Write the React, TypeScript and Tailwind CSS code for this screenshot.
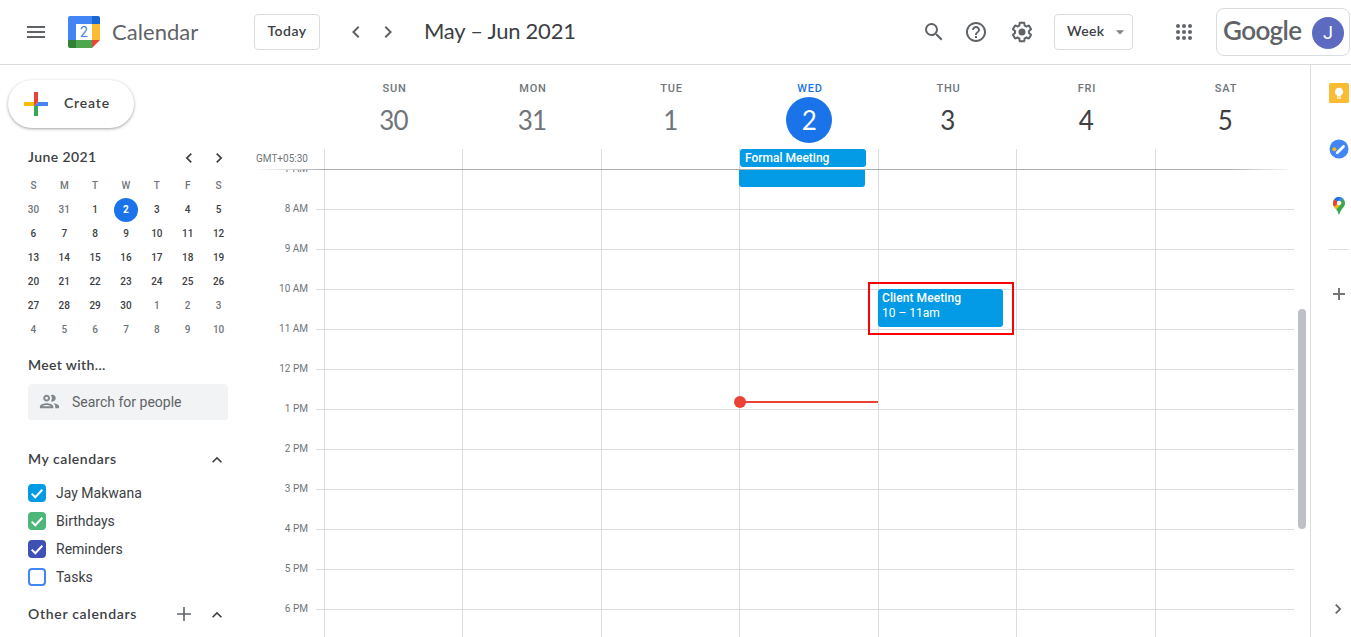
import React from "react";
import {
  MdMenu,
  MdSearch,
  MdHelpOutline,
  MdChevronLeft,
  MdChevronRight,
  MdArrowDropDown,
  MdExpandLess,
  MdOutlineGroup,
} from "react-icons/md";

const display = "font-['Lato','Liberation_Sans',sans-serif]";

const days = [
  { name: "SUN", num: "30", tone: "text-[#70757a]" },
  { name: "MON", num: "31", tone: "text-[#70757a]" },
  { name: "TUE", num: "1", tone: "text-[#70757a]" },
  { name: "WED", num: "2", tone: "text-white", today: true },
  { name: "THU", num: "3", tone: "text-[#3c4043]" },
  { name: "FRI", num: "4", tone: "text-[#3c4043]" },
  { name: "SAT", num: "5", tone: "text-[#3c4043]" },
];

const hours = ["7 AM", "8 AM", "9 AM", "10 AM", "11 AM", "12 PM", "1 PM", "2 PM", "3 PM", "4 PM", "5 PM", "6 PM"];

const monthDays = [
  30, 31, 1, 2, 3, 4, 5, 6, 7, 8, 9, 10, 11, 12, 13, 14, 15, 16, 17, 18, 19, 20, 21, 22, 23, 24, 25, 26, 27, 28, 29,
  30, 1, 2, 3, 4, 5, 6, 7, 8, 9, 10,
];

const calendars = [
  { name: "Jay Makwana", box: "bg-[#039be5] border-[#039be5]", checked: true },
  { name: "Birthdays", box: "bg-[#4db679] border-[#4db679]", checked: true },
  { name: "Reminders", box: "bg-[#3f51b5] border-[#3f51b5]", checked: true },
  { name: "Tasks", box: "bg-white border-[#4285f4]", checked: false },
];

const dayColumns = "grid grid-cols-[138px_139px_138px_139px_138px_139px_139px]";

function CalendarLogo() {
  return (
    <svg width="32" height="32" viewBox="0 0 32 32" className="shrink-0">
      <path d="M2 0h22v8H8v16H0V2a2 2 0 0 1 2-2z" fill="#4285f4" />
      <path d="M24 0h6a2 2 0 0 1 2 2v6h-8z" fill="#1967d2" />
      <path d="M24 8h8v16h-8z" fill="#fbbc34" />
      <path d="M8 24h16v8H8z" fill="#4ca750" />
      <path d="M0 24h8v8H2a2 2 0 0 1-2-2z" fill="#338037" />
      <path d="M24 24h8l-8 8z" fill="#ea4335" />
      <path d="M8 8h16v16H8z" fill="#fff" />
      <text x="16" y="21" textAnchor="middle" fontSize="14" fontFamily="Roboto" fill="#4285f4">
        2
      </text>
    </svg>
  );
}

function SettingsIcon() {
  return (
    <svg width="24" height="24" viewBox="0 0 24 24" fill="#5f6368">
      <path d="M13.85 22.25h-3.7c-.74 0-1.36-.54-1.45-1.27l-.27-1.89c-.27-.14-.53-.29-.79-.46l-1.8.72c-.7.26-1.47-.03-1.81-.65L2.2 15.53c-.35-.66-.2-1.44.36-1.88l1.53-1.19c-.01-.15-.02-.3-.02-.46 0-.15.01-.31.02-.46l-1.52-1.19c-.59-.45-.74-1.26-.37-1.88l1.85-3.19c.34-.62 1.11-.9 1.79-.63l1.81.73c.26-.17.52-.32.78-.46l.27-1.91c.09-.7.71-1.25 1.44-1.25h3.7c.74 0 1.36.54 1.45 1.27l.27 1.89c.27.14.53.29.79.46l1.8-.72c.71-.26 1.48.03 1.82.65l1.84 3.18c.36.66.2 1.44-.36 1.88l-1.52 1.19c.01.15.02.3.02.46s-.01.31-.02.46l1.52 1.19c.56.45.72 1.23.37 1.86l-1.86 3.22c-.34.62-1.11.9-1.8.63l-1.8-.72c-.26.17-.52.32-.78.46l-.27 1.91c-.1.68-.72 1.22-1.46 1.22zm-3.23-2h2.76l.37-2.55.53-.22c.44-.18.88-.44 1.34-.78l.45-.34 2.38.96 1.38-2.4-2.03-1.58.07-.56c.03-.26.06-.51.06-.78s-.03-.53-.06-.78l-.07-.56 2.03-1.58-1.39-2.4-2.39.96-.45-.35c-.42-.32-.87-.58-1.33-.77l-.52-.22-.37-2.55h-2.76l-.37 2.55-.53.21c-.44.19-.88.44-1.34.79l-.45.33-2.38-.95-1.39 2.39 2.03 1.58-.07.56a7 7 0 0 0-.06.79c0 .26.02.53.06.78l.07.56-2.03 1.58 1.38 2.4 2.39-.96.45.35c.43.33.86.58 1.33.77l.53.22.38 2.55z" />
      <circle cx="12" cy="12" r="3.5" />
    </svg>
  );
}

function AppsIcon() {
  return (
    <svg width="24" height="24" viewBox="0 0 24 24" fill="#5f6368">
      {[6, 12, 18].map((y) => [6, 12, 18].map((x) => <circle key={`${x}-${y}`} cx={x} cy={y} r="2" />))}
    </svg>
  );
}

function Header() {
  return (
    <header className="flex h-[65px] items-center border-b border-[#dadce0] pb-px pl-6 text-[#5f6368]">
      <MdMenu size={24} />
      <div className="ml-5">
        <CalendarLogo />
      </div>
      <span className={`${display} ml-3 w-[142px] text-[22px] leading-8 tracking-[0.05px]`}>Calendar</span>
      <button
        className={`${display} h-9 w-[66px] rounded border border-[#dadce0] pb-0.5 text-sm font-semibold tracking-[0.5px] text-[#3c4043]`}
      >
        Today
      </button>
      <MdChevronLeft size={24} className="ml-6" />
      <MdChevronRight size={24} className="ml-2" />
      <h1 className={`${display} ml-6 pb-0.5 text-[22px] leading-8 tracking-[-0.25px] text-[#3c4043]`}>May – Jun 2021</h1>
      <div className="ml-auto flex items-center">
        <MdSearch size={24} />
        <MdHelpOutline size={24} className="ml-[18px]" />
        <div className="ml-[22px]">
          <SettingsIcon />
        </div>
        <button
          className={`${display} ml-5 flex h-9 w-[79px] items-center rounded border border-[#dadce0] pl-3 text-sm font-semibold tracking-[0.35px] text-[#3c4043]`}
        >
          <span className="w-[43px] pb-0.5 text-left">Week</span>
          <MdArrowDropDown size={20} className="text-[#80868b]" />
        </button>
        <div className="ml-[39px]">
          <AppsIcon />
        </div>
        <div className="ml-5 mr-px flex h-12 w-[134px] items-center rounded-lg border border-[#dadce0] pl-1.5 pr-[5px]">
          <span className={`${display} flex-1 pb-1 text-[26px] font-semibold leading-8 tracking-[-0.6px]`}>Google</span>
          <span className="mt-0.5 grid size-8 place-items-center rounded-full bg-[#5c6bc0] text-lg text-white">J</span>
        </div>
      </div>
    </header>
  );
}

function MiniCalendar() {
  return (
    <section className="mt-3.5">
      <div className="flex h-8 items-center pb-0.5 pl-7 text-[#3c4043]">
        <span className={`${display} w-[151px] pb-px text-sm font-semibold tracking-[0.4px]`}>June 2021</span>
        <MdChevronLeft size={20} className="mt-0.5" />
        <MdChevronRight size={20} className="ml-2.5 mt-0.5" />
      </div>
      <div className="ml-[18px] grid w-[216px] grid-cols-7 text-center text-[10px] leading-6">
        {["S", "M", "T", "W", "T", "F", "S"].map((d, i) => (
          <span key={i} className="font-medium text-[#70757a]">
            {d}
          </span>
        ))}
        {monthDays.map((d, i) => {
          const outside = i < 2 || i > 31;
          if (i === 3) {
            return (
              <span key={i} className="mx-auto size-6 rounded-full bg-[#1a73e8] font-bold text-white">
                {d}
              </span>
            );
          }
          return (
            <span key={i} className={outside ? "font-medium text-[#70757a]" : "font-medium text-[#3c4043]"}>
              {d}
            </span>
          );
        })}
      </div>
    </section>
  );
}

function Sidebar() {
  return (
    <aside className="w-64 shrink-0 pt-[15px] text-[#3c4043]">
      <button className="ml-2 flex h-12 w-[126px] items-center rounded-full bg-white pl-2.5 shadow-[0_1px_2px_0_rgba(60,64,67,0.3),0_1px_3px_1px_rgba(60,64,67,0.15)]">
        <svg width="36" height="36" viewBox="0 0 36 36">
          <path fill="#34A853" d="M16 16v14h4V20z" />
          <path fill="#4285F4" d="M30 16H20l-4 4h14z" />
          <path fill="#FBBC05" d="M6 16v4h10l4-4z" />
          <path fill="#EA4335" d="M20 16V6h-4v14z" />
        </svg>
        <span className={`${display} ml-2.5 pb-0.5 text-sm font-semibold tracking-[0.8px]`}>Create</span>
      </button>
      <MiniCalendar />
      <h2 className={`${display} ml-7 mt-[13px] text-sm font-semibold leading-5 tracking-[0.35px]`}>Meet with...</h2>
      <div className="ml-7 mt-[9px] flex h-9 w-[200px] items-center rounded bg-[#f1f3f4] pb-px pl-2.5 text-sm text-[#5f6368]">
        <MdOutlineGroup size={23} className="text-[#80868b]" />
        <span className="ml-[11px] pt-px">Search for people</span>
      </div>
      <div className="ml-7 mt-[27px] flex h-6 items-center">
        <h2 className={`${display} w-[179px] pb-px text-sm font-semibold tracking-[0.55px]`}>My calendars</h2>
        <MdExpandLess size={20} className="mt-0.5" />
      </div>
      <ul className="ml-7 mt-2">
        {calendars.map((c) => (
          <li key={c.name} className="flex h-7 items-center gap-2.5 text-sm">
            <span className={`grid size-[18px] place-items-center rounded-sm border-2 ${c.box}`}>
              {c.checked && (
                <svg width="14" height="14" viewBox="0 0 14 14" fill="none" stroke="#fff" strokeWidth="2">
                  <path d="M1.7 7.6l3.6 3.6L12.3 3.7" />
                </svg>
              )}
            </span>
            {c.name}
          </li>
        ))}
      </ul>
      <div className="ml-7 mt-[11px] flex h-6 items-center">
        <h2 className={`${display} w-36 pb-px text-sm font-semibold tracking-[0.7px]`}>Other calendars</h2>
        <svg width="24" height="24" viewBox="0 0 24 24" fill="none" stroke="#5f6368" strokeWidth="1.6">
          <path d="M12 5v14M5 12h14" />
        </svg>
        <MdExpandLess size={20} className="ml-[11px] mt-0.5" />
      </div>
    </aside>
  );
}

function WeekHeader() {
  return (
    <div className="flex shrink-0">
      <div className="flex w-[68px] flex-col justify-end text-[10px] text-[#70757a]">
        <span className="h-5 leading-[19px]">GMT+05:30</span>
      </div>
      <div className={dayColumns}>
        {days.map((d) => (
          <div key={d.name} className="flex flex-col">
            <div className="flex h-[84px] flex-col items-center pl-[3px] pt-4">
              <span
                className={`text-[11px] font-medium leading-4 tracking-[0.8px] ${d.today ? "text-[#1a73e8]" : "text-[#70757a]"}`}
              >
                {d.name}
              </span>
              <span
                className={`${display} mr-0.5 grid size-[46px] place-items-center rounded-full text-[26px] leading-none tracking-[-0.8px] ${d.tone} ${d.today ? "bg-[#1a73e8]" : ""}`}
              >
                {d.num}
              </span>
            </div>
            <div className="h-5 border-l border-[#dadce0]">
              {d.today && (
                <div className="h-[18px] w-[126px] rounded-[3px] bg-[#039be5] pl-[5px] text-xs font-medium leading-[18px] text-white">
                  Formal Meeting
                </div>
              )}
            </div>
          </div>
        ))}
      </div>
    </div>
  );
}

function WeekGrid() {
  return (
    <div className="flex min-h-0 flex-1 overflow-hidden">
      <div className="-mt-[21px] w-[52px] text-right text-[10px] leading-10 text-[#70757a]">
        {hours.map((h) => (
          <div key={h} className="h-10">
            {h}
          </div>
        ))}
      </div>
      <div className="relative ml-2 grid h-[480px] w-[978px]">
        <div className="col-start-1 row-start-1">
          {hours.map((h) => (
            <div key={h} className="h-10 border-b border-[#dadce0]" />
          ))}
        </div>
        <div className={`${dayColumns} col-start-1 row-start-1 ml-2`}>
          {days.map((d) => (
            <div key={d.name} className="relative border-l border-[#dadce0]">
              {d.name === "WED" && (
                <>
                  <div className="absolute -left-px top-0 h-[17px] w-[126px] rounded-b-[3px] bg-[#039be5]" />
                  <div className="absolute left-0 top-[231px] h-0.5 w-[138px] bg-[#ea4335]" />
                  <div className="absolute -left-1.5 top-[226px] size-3 rounded-full bg-[#ea4335]" />
                </>
              )}
              {d.name === "THU" && (
                <>
                  <div className="absolute -left-px top-[119px] h-[38px] w-[125px] rounded-[3px] bg-[#039be5] pl-1 pt-0.5 text-xs leading-[15px] text-white">
                    <div className="font-medium tracking-[0.08px]">Client Meeting</div>
                    <div>10 – 11am</div>
                  </div>
                  <div className="absolute -left-[11px] top-[112px] z-10 h-[53px] w-[146px] border-2 border-[#fb0007]" />
                </>
              )}
            </div>
          ))}
        </div>
      </div>
      <div className="ml-1 mt-[139px] h-[220px] w-2 rounded-full bg-[#bdc1c6]" />
    </div>
  );
}

function SidePanel() {
  return (
    <aside className="flex w-[41px] shrink-0 flex-col items-center border-l border-[#dadce0] pl-4 pt-[18px]">
      <svg width="20" height="20" viewBox="0 0 20 20" className="shrink-0">
        <rect width="20" height="20" rx="1.5" fill="#fbbc34" />
        <path d="M10 4.8a4 4 0 0 0-2 7.5v1.1h4v-1.1a4 4 0 0 0-2-7.5z" fill="#fff" />
        <path d="M8 14.3h4v1.3H8z" fill="#fff" />
      </svg>
      <svg width="20" height="20" viewBox="0 0 20 20" className="mt-9 shrink-0">
        <circle cx="10" cy="10" r="9.5" fill="#4285f4" />
        <circle cx="5.3" cy="10.2" r="2" fill="#fbbc04" />
        <path d="M8.2 13.8l6.3-6.3" stroke="#fff" strokeWidth="2.8" strokeLinecap="round" />
      </svg>
      <svg width="12" height="18" viewBox="0 0 12 18" className="mt-[38px] shrink-0">
        <defs>
          <clipPath id="pin">
            <path d="M6 0a6 6 0 0 0-6 6c0 2 .8 3.3 2 4.8 1.6 2.1 3 3.700 3.300 5.800.1.7.3 1 .7 1s.6-.3.7-1C7 14.500 8.400 12.900 10 10.800c1.200-1.500 2-2.800 2-4.800a6 6 0 0 0-6-6z" />
          </clipPath>
        </defs>
        <g clipPath="url(#pin)">
          <path d="M0 0h12v18H0z" fill="#34a853" />
          <path d="M0 0h12L6 6z" fill="#4285f4" />
          <path d="M1.4 2.2l2.8 2.3L8 0H2z" fill="#1a73e8" />
          <path d="M1.4 2L6 6 .9 10.5-1 8V2z" fill="#ea4335" />
          <path d="M6 6L1.2 9.8l2 3L9.5 5z" fill="#fbbc04" />
          <circle cx="6" cy="6" r="2.2" fill="#fff" />
        </g>
      </svg>
      <div className="mt-[34px] h-px w-5 shrink-0 bg-[#dadce0]" />
      <svg width="24" height="24" viewBox="0 0 24 24" fill="none" stroke="#757575" strokeWidth="2" className="mt-8 shrink-0">
        <path d="M12 6v12M6 12h12" />
      </svg>
      <MdChevronRight size={20} className="mb-[18px] mr-0.5 mt-auto shrink-0 text-[#5f6368]" />
    </aside>
  );
}

export default function App() {
  return (
    <div className="flex h-[637px] w-[1351px] flex-col overflow-hidden bg-white font-['Roboto',sans-serif]">
      <Header />
      <div className="flex min-h-0 flex-1">
        <Sidebar />
        <main className="flex min-w-0 flex-1 flex-col">
          <WeekHeader />
          <div className="relative z-10 h-px w-[1038px] shrink-0 bg-[linear-gradient(to_right,transparent,#aaadb1_68px,#aaadb1_970px,transparent)]" />
          <WeekGrid />
        </main>
        <SidePanel />
      </div>
    </div>
  );
}
